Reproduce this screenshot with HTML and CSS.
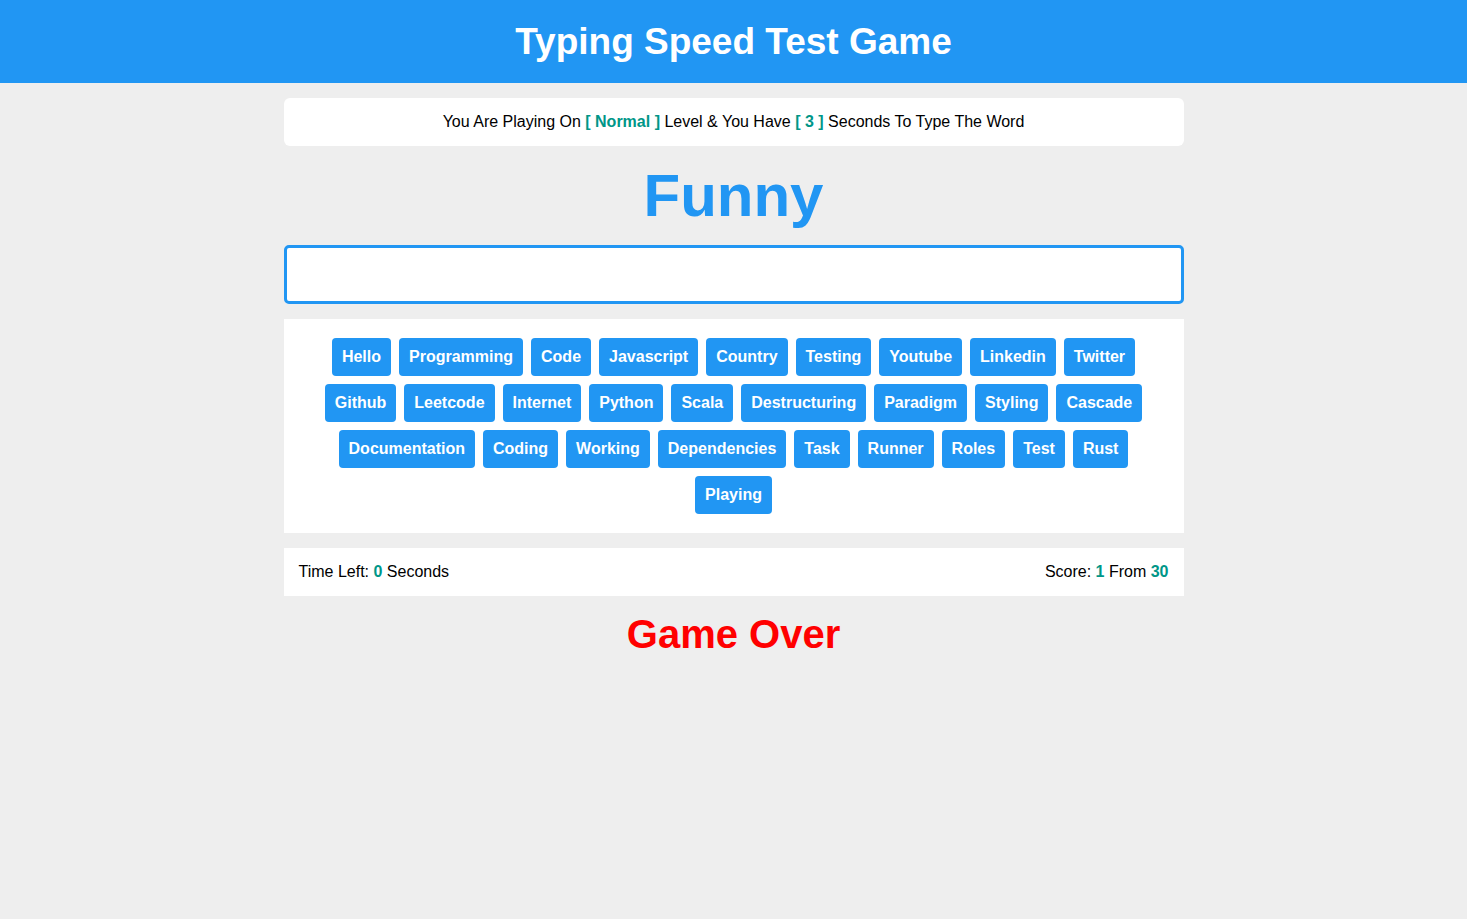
FILE: index.html
```html
<!DOCTYPE html>
<html lang="en">
<head>
<meta charset="UTF-8">
<title>Typing Speed Test Game</title>
<link rel="stylesheet" href="styles.css">
</head>
<body>
<header class="name">Typing Speed Test Game</header>
<main class="game">
  <div class="message">You Are Playing On <span class="lvl">[ Normal ]</span> Level &amp; You Have <span class="seconds">[ 3 ]</span> Seconds To Type The Word</div>
  <div class="the-word">Funny</div>
  <input class="input" type="text">
  <div class="upcoming-words">
    <div class="tag">Hello</div>
    <div class="tag">Programming</div>
    <div class="tag">Code</div>
    <div class="tag">Javascript</div>
    <div class="tag">Country</div>
    <div class="tag">Testing</div>
    <div class="tag">Youtube</div>
    <div class="tag">Linkedin</div>
    <div class="tag">Twitter</div>
    <div class="tag">Github</div>
    <div class="tag">Leetcode</div>
    <div class="tag">Internet</div>
    <div class="tag">Python</div>
    <div class="tag">Scala</div>
    <div class="tag">Destructuring</div>
    <div class="tag">Paradigm</div>
    <div class="tag">Styling</div>
    <div class="tag">Cascade</div>
    <div class="tag">Documentation</div>
    <div class="tag">Coding</div>
    <div class="tag">Working</div>
    <div class="tag">Dependencies</div>
    <div class="tag">Task</div>
    <div class="tag">Runner</div>
    <div class="tag">Roles</div>
    <div class="tag">Test</div>
    <div class="tag">Rust</div>
    <div class="tag">Playing</div>
  </div>
  <div class="control">
    <div class="time">Time Left: <span class="num">0</span> Seconds</div>
    <div class="score">Score: <span class="num">1</span> From <span class="num">30</span></div>
  </div>
  <div class="finish"><span class="bad">Game Over</span></div>
</main>
</body>
</html>
```
FILE: styles.css
```css
* {
  box-sizing: border-box;
}
body {
  margin: 0;
  background-color: #eeeeee;
  font-family: "Liberation Sans", Arial, sans-serif;
  color: #000;
}
.name {
  background-color: #2196f3;
  color: #fff;
  font-weight: bold;
  font-size: 37px;
  line-height: 83px;
  height: 83px;
  text-align: center;
}
.game {
  width: 900px;
  margin: 15px auto 0;
}
.message {
  background-color: #fff;
  border-radius: 6px;
  padding: 15px;
  font-size: 16px;
  line-height: 18px;
  text-align: center;
}
.lvl,
.seconds,
.num {
  color: #009688;
  font-weight: bold;
}
.the-word {
  margin: 15px 0;
  font-size: 60px;
  line-height: 69px;
  font-weight: bold;
  color: #2196f3;
  text-align: center;
}
.input {
  display: block;
  width: 100%;
  height: 59px;
  border: 3px solid #2196f3;
  border-radius: 5px;
  padding: 10px;
  font-size: 20px;
  background: #fff;
  outline: none;
  margin: 0;
}
.upcoming-words {
  margin-top: 15px;
  background-color: #fff;
  padding: 19px 20px;
  display: flex;
  flex-wrap: wrap;
  justify-content: center;
  gap: 8px;
}
.tag {
  background-color: #2196f3;
  color: #fff;
  font-weight: bold;
  font-size: 16px;
  line-height: 18px;
  padding: 10px;
  border-radius: 4px;
}
.control {
  margin-top: 15px;
  background-color: #fff;
  padding: 15px;
  display: flex;
  justify-content: space-between;
  font-size: 16px;
  line-height: 18px;
}
.finish {
  margin-top: 15px;
  text-align: center;
  font-size: 40px;
  line-height: 46px;
  font-weight: bold;
}
.bad {
  color: #ff0000;
}
```
